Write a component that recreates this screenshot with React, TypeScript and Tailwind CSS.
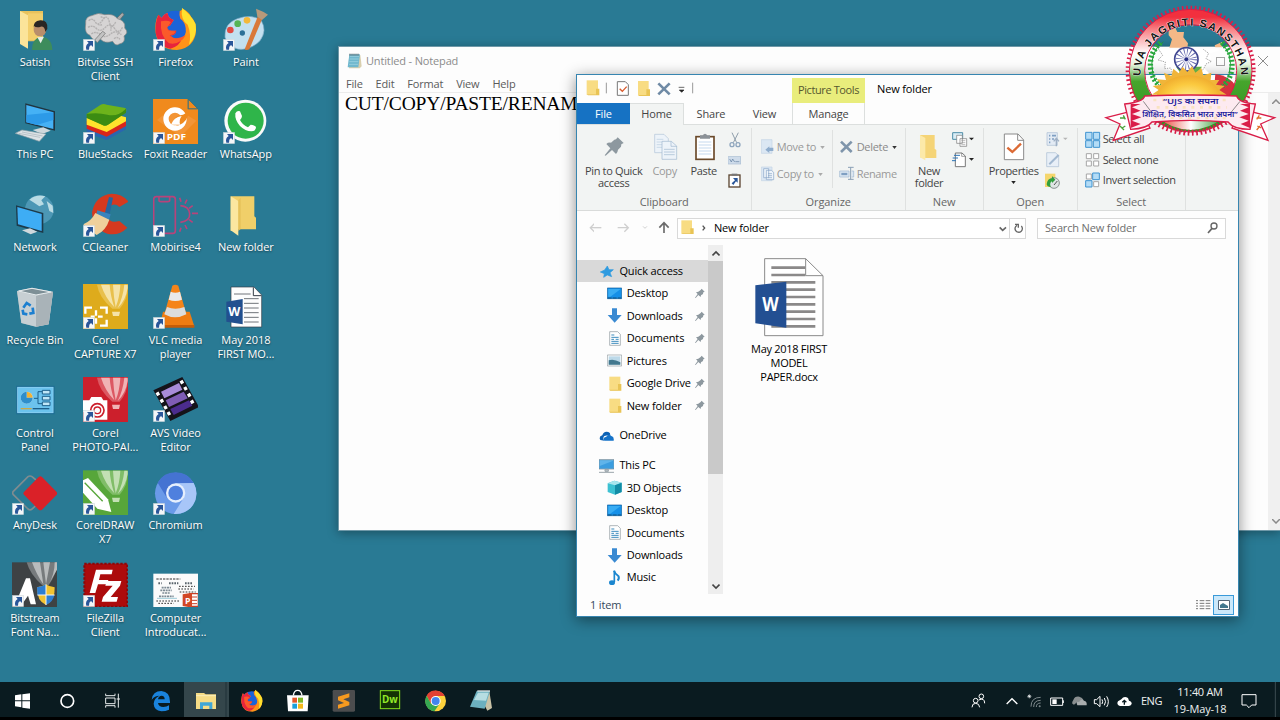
import type { ReactNode } from "react"
import clsx from "clsx"

// All artwork is drawn on a grid of three units per pixel
function Art({ vb, shortcut, className, children }: { vb: string; shortcut?: boolean; className?: string; children?: ReactNode }) {
  const [x, y, w, h] = vb.split(" ").map(Number)
  return (
    <svg viewBox={vb} width={w / 3} height={h / 3} className={clsx("block shrink-0", className)} fill="none">
      {children}
      {shortcut && (
        <g transform={`translate(${x} ${y + 100})`}>
          <rect x="1" width="34" height="34" fill="#f4f6f8" stroke="#b9c3c9" strokeWidth="1" />
          <path d="M12 5H30V23L24 17Q17 21 18 31H10Q6 18 17 11Z" fill="#2a5699" />
        </g>
      )}
    </svg>
  )
}

function Balloon({ x, y, a, b }: { x: number; y: number; a: string; b: string }) {
  return (
    <g transform={`translate(${x} ${y})`}>
      <path d="M42 2Q48 40 88 74H110Q136 45 134 5L130 2Z" fill={a} />
      <path d="M54 2Q66 40 94 70Q82 34 80 2ZM90 2Q92 40 98 70Q110 40 112 2ZM124 2Q120 40 104 72Q128 50 134 12V2Z" fill={b} />
      <path d="M87 83H111L108 96H90Z" fill={b} />
    </g>
  )
}

const art = {
  satish: (
    <Art vb="36 18 135 135">
      <path d="M60 33H129V124H78L60 130Z" fill="#e8c25c" />
      <path d="M60 33L84 46V146L60 132Z" fill="#fbe49a" />
      <path d="M84 40H129V120H84Z" fill="#f3cf6c" />
      <path d="M96 150Q96 114 124 110Q156 112 157 150Z" fill="#3d8c5c" />
      <path d="M112 112L122 130L132 110Z" fill="#e9eee8" />
      <circle cx="120" cy="90" r="19" fill="#b98e6c" />
      <path d="M101 88Q98 62 121 61Q144 60 142 86L136 96Q134 78 122 80Q110 84 101 78Z" fill="#2a2623" />
    </Art>
  ),
  bitvise: (
    <Art vb="247 18 135 135" shortcut>
      <path d="M345 58L365 38L370 44L352 66Z" fill="#a9a9a9" stroke="#666" strokeWidth="2" />
      <path d="M255 72Q252 50 276 46Q292 36 312 44Q340 40 350 56Q376 62 372 84Q386 98 370 108Q376 128 356 132Q344 140 336 124Q312 132 300 118Q276 126 268 106Q250 100 255 72Z" fill="#d6d4d4" stroke="#858585" strokeWidth="2" />
      <path
        d="M264 62Q276 52 284 66T306 60T326 66T346 64M262 82Q276 74 288 86T314 82T342 86T366 80M272 102Q286 92 300 104T330 102T362 104M340 116Q350 108 358 118M300 50Q310 56 318 50M292 72Q296 78 304 74M326 74Q334 80 330 92M352 92Q356 98 350 104"
        stroke="#b3b1b1"
        strokeWidth="4"
        strokeDasharray="6 2"
      />
      <path d="M282 120L306 94L314 100L290 128Z" fill="#c3c3c3" stroke="#6c6c6c" strokeWidth="2" />
    </Art>
  ),
  firefox: (
    <Art vb="458 18 135 135" shortcut>
      <FirefoxShape />
    </Art>
  ),
  paint: (
    <Art vb="669 18 135 135" shortcut>
      <path d="M675 112Q672 70 712 56Q756 40 784 62Q802 92 780 122Q760 144 728 148Q696 150 700 128Q680 128 675 112Z" fill="#c3e0f0" stroke="#7fabc6" strokeWidth="2" />
      <circle cx="691" cy="90" r="10" fill="#e14b43" />
      <circle cx="713" cy="71" r="10" fill="#54b455" />
      <circle cx="741" cy="61" r="10" fill="#f3b83a" />
      <circle cx="727" cy="99" r="8" fill="#2b6f97" />
      <path d="M773 50L786 58L748 148Q738 152 734 148Z" fill="#d9793a" />
      <path d="M768 26Q790 34 804 44L786 60L772 50Z" fill="#b7997a" />
    </Art>
  ),
  thisPc: (
    <Art vb="36 297 135 135">
      <path d="M76 310L165 334V392L76 370Z" fill="#20343f" />
      <path d="M79 315L160 337V387L79 367Z" fill="#45b1f5" />
      <path d="M79 345L160 337V360L110 375L79 367Z" fill="#2c9ae8" />
      <path d="M98 390L130 382L152 392L126 402Z" fill="#cfd8dc" />
      <path d="M46 400L66 390L138 402L118 424Z" fill="#dde3e6" stroke="#8fa0a8" strokeWidth="2" />
      <path d="M56 400L120 412M66 396L128 408" stroke="#a9b4ba" strokeWidth="2" />
    </Art>
  ),
  bluestacks: (
    <Art vb="247 297 135 135" shortcut>
      <path d="M258 374L318 352L376 372V388L318 420L258 398Z" fill="#2b65b0" />
      <path d="M258 364L318 344L376 362V378L318 410L258 386Z" fill="#d9261c" />
      <path d="M258 354L318 336L376 352V364L318 396L258 374Z" fill="#ffe32c" />
      <path d="M258 342L300 314Q308 310 318 314L374 324Q380 330 374 338L322 374Q314 380 304 374L260 354Z" fill="#6db31b" />
      <path d="M258 342Q290 336 320 344T376 326V338L322 374Q312 380 304 374L258 354Z" fill="#3c8c12" />
    </Art>
  ),
  foxit: (
    <Art vb="458 297 135 135" shortcut>
      <path d="M458 297H562V328H593V432H458Z" fill="#f08a1d" />
      <path d="M564 298L592 326H564Z" fill="#f08a1d" stroke="#2b6980" strokeWidth="2" />
      <path d="M470 360L520 320L588 362L540 410Z" fill="#f39536" />
      <circle cx="524" cy="357" r="27" stroke="#fff" strokeWidth="16" />
      <path d="M520 366Q520 346 548 344L566 334Q562 366 536 376Q522 378 520 366Z" fill="#f08a1d" />
      <path d="M512 374Q520 352 544 348Q534 362 540 374Z" fill="#fff" />
      <text x="499" y="421" fontSize="26" fontWeight="700" fontFamily="Open Sans, sans-serif" fill="#fff" textLength="58" lengthAdjust="spacingAndGlyphs">PDF</text>
    </Art>
  ),
  whatsapp: (
    <Art vb="669 297 135 135" shortcut>
      <circle cx="736" cy="362" r="63" fill="#fafafa" />
      <circle cx="737" cy="362" r="54" fill="#2fb54a" />
      <path d="M706 340Q712 330 720 334L726 348Q726 354 720 360Q728 376 744 382L752 374Q764 374 768 382Q768 394 754 394Q736 394 720 378Q704 360 706 340Z" fill="#fff" />
    </Art>
  ),
  network: (
    <Art vb="36 35 135 135">
      <circle cx="118" cy="88" r="43" fill="#4c97b5" />
      <path d="M88 58Q110 40 136 48L124 60L132 72L118 78L100 66ZM140 62L158 76L160 98L148 92Z" fill="#b9dbe4" />
      <path d="M48 75L130 98V158L50 136Z" fill="#1d3a4a" />
      <path d="M52 80L125 101V152L54 132Z" fill="#3eadf5" />
      <path d="M66 150L90 144L112 154L92 162Z" fill="#cfd8dc" />
    </Art>
  ),
  ccleaner: (
    <Art vb="247 35 135 135" shortcut>
      <path d="M384 64L356 80Q346 70 334 74Q316 84 320 110Q328 130 356 122L380 142Q354 168 320 160Q276 146 274 96Q284 44 334 40Q364 40 384 64Z" fill="#d5391f" />
      <path d="M325 50L337 52L326 106L312 100Z" fill="#2566a0" />
      <path d="M290 90L330 102L324 122L286 106Z" fill="#3a84bd" />
      <path d="M284 98L326 118Q316 150 288 164Q264 150 248 132Q272 122 284 98Z" fill="#efd09c" />
    </Art>
  ),
  mobirise: (
    <Art vb="458 35 135 135" shortcut>
      <rect x="460" y="49" width="65" height="110" rx="8" stroke="#b8437a" strokeWidth="5" />
      <path d="M476 50V60Q476 64 482 64H502Q508 64 508 60V50M540 76Q566 78 568 100T540 126M538 52L542 64M560 58L554 70M577 76L566 84M593 99H575M577 126L566 118M560 146L554 134M538 154L542 142" stroke="#b8437a" strokeWidth="5" />
    </Art>
  ),
  folder: (
    <Art vb="669 35 135 135">
      <path d="M692 48H763V108L768 112V147H716L692 152Z" fill="#f0cf69" />
      <path d="M692 48L715 62V166L692 150Z" fill="#fbe7a0" />
      <path d="M715 60V152L722 146V52Z" fill="#e6c25a" />
    </Art>
  ),
  bin: (
    <Art vb="36 313 135 135">
      <path d="M51 334L96 324L159 336L146 434L108 441L64 430Z" fill="#b5c0c5" />
      <path d="M51 334L108 348L159 336L146 434L108 441L64 430Z" fill="#cdd4d7" opacity=".75" />
      <path d="M108 348V441L146 434L159 336Z" fill="#a9b3b8" />
      <path d="M56 334L96 326L154 337L108 346Z" fill="#7d8f96" stroke="#e6ecee" strokeWidth="3" />
      <path d="M70 384L80 370L92 378M98 384L100 400L88 402M82 404L70 402L68 390" stroke="#1c7fd0" strokeWidth="8" />
    </Art>
  ),
  capture: (
    <Art vb="247 313 135 135" shortcut>
      <rect x="247" y="313" width="135" height="135" fill="#deab1c" />
      <Balloon x={247} y={313} a="#e8c04d" b="#f5e3a8" />
      <path d="M254 402V384H274M298 384H318V402M318 420V438H298M254 420V438H274M286 392V408M286 416V432M270 411H282M292 411H306" stroke="#fff" strokeWidth="7" />
    </Art>
  ),
  vlc: (
    <Art vb="458 313 135 135" shortcut>
      <path d="M488 396H568L582 440H478Z" fill="#ef7c12" />
      <path d="M476 436H582V444H476Z" fill="#c65c07" />
      <path d="M516 318Q525 312 534 318L558 404Q524 420 492 404Z" fill="#f58419" />
      <path d="M511 336Q525 342 539 336L545 360Q525 368 505 360Z" fill="#e9e9e9" />
      <path d="M500 382Q525 392 552 382L558 404Q524 422 492 404Z" fill="#dcdcdc" />
    </Art>
  ),
  doc: (
    <Art vb="669 313 135 135">
      <path d="M693 322H762L785 346V442H693Z" fill="#fdfdfd" stroke="#333b45" strokeWidth="2" />
      <path d="M760 323V348H784" stroke="#333b45" strokeWidth="3" />
      <path d="M702 343H752M732 357H776M732 371H776M732 385H776M732 399H776M732 413H776M732 427H776" stroke="#70757a" strokeWidth="3" />
      <path d="M679 366L728 358V434L679 426Z" fill="#22508f" />
      <text x="685" y="409" fontSize="38" fontWeight="700" fontFamily="Open Sans, sans-serif" fill="#fff" textLength="36" lengthAdjust="spacingAndGlyphs">W</text>
    </Art>
  ),
  control: (
    <Art vb="36 36 135 135">
      <rect x="50" y="64" width="112" height="82" fill="#8fd1f3" stroke="#1b6a92" strokeWidth="3" />
      <rect x="54" y="68" width="104" height="74" fill="#6cc3ee" />
      <circle cx="80" cy="98" r="18" fill="#e4f2fa" />
      <path d="M80 80A18 18 0 0 1 98 98H80Z" fill="#f2b235" />
      <path d="M80 80V98H98A18 18 0 1 1 80 80Z" fill="#2f8ecb" />
      <path d="M102 100H114V80H126M114 100V116H126" stroke="#1b5f8a" strokeWidth="3" />
      <path d="M127 76H150V87H127ZM127 94H150V105H127ZM127 111H150V122H127Z" fill="#bfe6f7" stroke="#1b5f8a" strokeWidth="3" />
      <path d="M62 131H95" stroke="#c9a94b" strokeWidth="4" />
      <path d="M98 131H148" stroke="#1b5f8a" strokeWidth="4" />
    </Art>
  ),
  photo: (
    <Art vb="247 36 135 135" shortcut>
      <rect x="247" y="36" width="135" height="135" fill="#cc1f2c" />
      <Balloon x={247} y={36} a="#dc5862" b="#f0b3b5" />
      <path d="M247 106H266L272 96H302L308 106H320V164H280L247 140Z" fill="#fff" />
      <circle cx="290" cy="136" r="20" fill="#fff" stroke="#cc1f2c" strokeWidth="5" />
      <circle cx="290" cy="136" r="10" stroke="#cc1f2c" strokeWidth="4" />
    </Art>
  ),
  avs: (
    <Art vb="458 36 135 135" shortcut>
      <path d="M459 76L546 36L596 126L510 168Z" fill="#15131a" />
      <path d="M482 80L536 54L546 74L492 100Z" fill="#a88bd8" />
      <path d="M496 106L550 80L562 100L506 126Z" fill="#7f5cb4" />
      <path d="M510 132L566 106L576 122L520 150Z" fill="#4b2c8e" />
      <path d="M470 82L475 91M482 103L487 112M493 123L498 132M503 141L508 150M542 47L547 56M553 66L558 75M564 86L569 95M573 106L578 115" stroke="#fff" strokeWidth="10" />
    </Art>
  ),
  anydesk: (
    <Art vb="36 314 135 135" shortcut>
      <path d="M108 344L96 334Q90 330 84 334L40 378Q36 383 40 388L84 431Q90 436 96 431L108 420" stroke="#7f8c90" strokeWidth="5" />
      <path d="M116 335Q121 331 126 335L170 380Q174 384 170 388L126 433Q121 437 116 433L72 388Q68 384 72 380Z" fill="#da2128" />
    </Art>
  ),
  corel: (
    <Art vb="247 314 135 135" shortcut>
      <rect x="247" y="315" width="135" height="135" fill="#57a63a" />
      <Balloon x={247} y={314} a="#80bd68" b="#c3e0b4" />
      <path d="M247 345L262 338L322 402L332 440L290 430L247 382Z" fill="#fff" />
      <path d="M252 352L306 408" stroke="#57a63a" strokeWidth="4" />
    </Art>
  ),
  chromium: (
    <Art vb="458 314 135 135" shortcut>
      <circle cx="526" cy="384" r="62" fill="#6a9ae9" />
      <path d="M472 352A62 62 0 0 1 580 353H526L500 398Z" fill="#4573d2" />
      <path d="M580 353A62 62 0 0 1 520 446L550 398Q560 376 526 354Z" fill="#a8c6f8" />
      <circle cx="526" cy="383" r="29" fill="#e6effd" />
      <circle cx="526" cy="383" r="22" fill="#4f80de" />
    </Art>
  ),
  bitstream: (
    <Art vb="36 37 135 135" shortcut>
      <rect x="36" y="38" width="135" height="135" fill="#3e4244" />
      <path d="M80 38Q90 74 126 106H146Q172 70 171 38Z" fill="#777b7d" />
      <path d="M96 38Q110 76 130 104L120 38ZM130 38L138 104L150 38ZM164 38Q164 74 146 104L171 60V38Z" fill="#b9bcbd" />
      <path d="M46 164L78 86H90L108 164H92L84 138L66 164Z" fill="#fff" />
      <path d="M111 113Q124 112 137 104Q150 112 164 113Q166 152 138 166Q110 154 111 113Z" fill="#f3c331" />
      <path d="M111 113Q124 112 138 104V136H112ZM138 136H163Q160 156 138 166Z" fill="#2d7ed3" />
      <path d="M138 104V166M112 136H164" stroke="#f4f4f4" strokeWidth="3" />
    </Art>
  ),
  filezilla: (
    <Art vb="247 37 135 135" shortcut>
      <rect x="251" y="42" width="129" height="129" fill="#ac0b0c" stroke="#8b0708" strokeWidth="6" strokeDasharray="7 5" />
      <path d="M286 60H336L333 74H299L295 91H323L320 104H292L284 130H267Z" fill="#fff" />
      <path d="M318 94H362L358 108L330 142H352L348 156H303L307 142L336 108H314Z" fill="#fff" />
    </Art>
  ),
  ppt: (
    <Art vb="458 37 135 135">
      <rect x="459" y="72" width="135" height="101" fill="#fbfbfb" />
      <path d="M468 88H540" stroke="#333" strokeWidth="3" strokeDasharray="7 3" />
      <path d="M474 101H484M506 101H534M554 101H576" stroke="#58636b" strokeWidth="6" strokeDasharray="5 3" />
      <path d="M536 110H584M534 118H580M538 127H586M468 154H540M474 161H520" stroke="#333" strokeWidth="3" strokeDasharray="5 4" />
      <path d="M484 114H512M480 122H514M486 130H508M476 140H520" stroke="#7d8a94" strokeWidth="5" strokeDasharray="6 2" />
      <path d="M470 146H530" stroke="#9ecbd8" strokeWidth="3" />
      <path d="M568 132H594V170H568Z" fill="#fff" stroke="#c94028" strokeWidth="4" />
      <path d="M574 142H590M574 152H590M574 162H590" stroke="#c94028" strokeWidth="3" />
      <path d="M547 134L575 129V174L547 169Z" fill="#d24726" />
      <text x="554" y="162" fontSize="26" fontWeight="700" fontFamily="Open Sans, sans-serif" fill="#fff">P</text>
    </Art>
  ),
}

function FirefoxShape() {
  return (
    <>
      <circle cx="525" cy="89" r="57" fill="#1c63d8" />
      <path d="M538 34Q554 24 545 26Q544 22 550 28Q566 36 572 50Q588 66 587 92Q584 142 530 150Q474 150 466 98Q462 66 474 44L484 54Q492 40 502 40Q502 54 520 60L510 76L500 80Q500 90 512 92L528 92Q526 106 510 106Q520 120 540 116Q560 108 556 84Q554 66 540 56Q536 44 538 34Z" fill="#ff9318" />
      <path d="M474 44L484 54Q492 40 502 40Q502 54 520 60L510 76L500 80Q500 90 512 92L528 92Q526 106 510 106Q522 122 544 114Q540 138 510 146Q474 140 466 98Q464 66 474 44Z" fill="#e8243c" />
      <path d="M482 64Q500 60 512 66L504 78Q496 84 506 92L526 94Q522 104 508 106Q522 124 556 106Q540 136 506 130Q478 110 482 64Z" fill="#fb5a2a" />
      <path d="M545 24Q572 44 586 72Q592 108 566 134Q574 104 562 74Q540 60 545 24Z" fill="#ffe02e" />
    </>
  )
}

const desktop: { label: string; icon: ReactNode }[] = [
  { label: "Satish", icon: art.satish },
  { label: "This PC", icon: art.thisPc },
  { label: "Network", icon: art.network },
  { label: "Recycle Bin", icon: art.bin },
  { label: "Control\nPanel", icon: art.control },
  { label: "AnyDesk", icon: art.anydesk },
  { label: "Bitstream\nFont Na...", icon: art.bitstream },
  { label: "Bitvise SSH\nClient", icon: art.bitvise },
  { label: "BlueStacks", icon: art.bluestacks },
  { label: "CCleaner", icon: art.ccleaner },
  { label: "Corel\nCAPTURE X7", icon: art.capture },
  { label: "Corel\nPHOTO-PAI...", icon: art.photo },
  { label: "CorelDRAW\nX7", icon: art.corel },
  { label: "FileZilla\nClient", icon: art.filezilla },
  { label: "Firefox", icon: art.firefox },
  { label: "Foxit Reader", icon: art.foxit },
  { label: "Mobirise4", icon: art.mobirise },
  { label: "VLC media\nplayer", icon: art.vlc },
  { label: "AVS Video\nEditor", icon: art.avs },
  { label: "Chromium", icon: art.chromium },
  { label: "Computer\nIntroducat...", icon: art.ppt },
  { label: "Paint", icon: art.paint },
  { label: "WhatsApp", icon: art.whatsapp },
  { label: "New folder", icon: art.folder },
  { label: "May 2018\nFIRST MO...", icon: art.doc },
]

function Desktop() {
  return (
    <div className="-ml-[0.2px] grid w-[281.2px] grid-flow-col auto-cols-[70.3px] grid-rows-[repeat(7,92.7px)] tracking-[-0.06px]">
      {desktop.map((item) => (
        <div key={item.label} className="flex flex-col items-center pt-[6.3px] text-center">
          {item.icon}
          <div className="mt-[3.5px] text-[11px] leading-[14px] whitespace-pre text-white [text-shadow:0_1px_2px_rgba(0,0,0,0.5)]">
            {item.label}
          </div>
        </div>
      ))}
    </div>
  )
}

function NotepadIcon() {
  return (
    <Art vb="0 0 45 48">
      <path d="M8 6H40L44 40L38 46H6Z" fill="#d9cfae" />
      <path d="M7 4H39L34 43H2Z" fill="#6fb7cd" />
      <path d="M9 10H36M8 18H35M7 26H34M6 34H33" stroke="#a6d9e6" strokeWidth="2" />
      <path d="M9 2V8M15 2V8M21 2V8M27 2V8M33 2V8" stroke="#58646a" strokeWidth="3" />
    </Art>
  )
}

function Notepad() {
  return (
    <div className="absolute top-[46px] left-[338px] flex h-[485px] w-[942px] flex-col border border-r-0 border-[#6f98a8] bg-[#fdfdfd] shadow-[0_2px_10px_rgba(0,0,0,0.35)]">
      <div className="flex h-[28px] items-center pl-[8px] text-[11px] text-[#8c8c8c]">
        <NotepadIcon />
        <span className="ml-1 grow">Untitled - Notepad</span>
        <div className="mr-[33px] h-[9px] w-[9px] border border-[#a5a5a5]" />
        <svg viewBox="0 0 10 10" className="mr-[12px] h-[10px] w-[10px]" stroke="#8c8c8c">
          <path d="M0 0L10 10M10 0L0 10" />
        </svg>
      </div>
      <div className="flex h-[18px] items-center gap-[13px] border-b border-[#ececec] pt-px pl-[7px] text-[11px] tracking-[-0.2px] text-[#5a5a5a]">
        {["File", "Edit", "Format", "View", "Help"].map((m) => (
          <span key={m}>{m}</span>
        ))}
      </div>
      <div className="flex min-h-0 grow">
        <div className="grow overflow-hidden pl-[6px] font-['Liberation_Serif',serif] text-[19.5px] leading-[22px] tracking-[-0.15px] text-black">
          CUT/COPY/PASTE/RENAME
        </div>
        <div className="flex w-[12px] flex-col justify-between bg-[#f0f0f0] py-[6px] pl-1">
          <svg viewBox="0 0 8 5" className="h-[5px] w-2" stroke="#8a8a8a" strokeWidth="1.5" fill="none">
            <path d="M0 5L4 1L8 5" />
          </svg>
          <svg viewBox="0 0 8 5" className="h-[5px] w-2" stroke="#8a8a8a" strokeWidth="1.5" fill="none">
            <path d="M0 0L4 4L8 0" />
          </svg>
        </div>
      </div>
    </div>
  )
}

function TitleBar() {
  return (
    <div className="flex h-7 items-center pl-[0.7px]">
      <Art vb="8 24 73 66">
        <path d="M34 31H68V74H34Z" fill="#f8dc83" />
        <path d="M62 56H72V76H38L34 73H62Z" fill="#e9c455" />
      </Art>
      <Art vb="81 24 34 66">
        <path d="M94 38V70" stroke="#999" strokeWidth="3" />
      </Art>
      <Art vb="115 24 60 66">
        <path d="M128 35H152L161 44V76H128Z" fill="#fff" stroke="#777" strokeWidth="3" />
        <path d="M135 56L143 64L156 50" stroke="#d9592b" strokeWidth="4" />
      </Art>
      <Art vb="175 24 60 66">
        <path d="M190 33H222V76H190Z" fill="#f8dc83" />
        <path d="M215 58H226V78H194L190 75H215Z" fill="#e9c455" />
      </Art>
      <Art vb="235 24 60 66">
        <path d="M251 40L285 73M285 40L251 73" stroke="#6f8aa5" strokeWidth="8" />
      </Art>
      <Art vb="295 24 356 66">
        <path d="M312 52H329M314 60H328L321 67Z" fill="#222" stroke="#222" strokeWidth="2" />
        <path d="M354 38V70" stroke="#999" strokeWidth="3" />
      </Art>
      <div className="mt-[3px] flex h-[25px] w-[73px] items-center justify-center bg-[#e9ed7c] text-[11px] tracking-[-0.4px] whitespace-nowrap text-[#56572f]">
        Picture Tools
      </div>
      <span className="ml-3 text-[11px] text-black">New folder</span>
    </div>
  )
}

function Tabs() {
  return (
    <div className="flex h-[22px] border-b border-[#dcdfde] text-center text-[11px] leading-[21px] text-[#444]">
      <div className="w-[53px] bg-[#1672c3] text-white">File</div>
      <div className="-mb-px h-[22px] w-[54px] border-t border-r border-[#dcdfde] bg-[#f2f4f3] leading-[20px]">Home</div>
      <div className="w-[54px]">Share</div>
      <div className="w-[53px]">View</div>
      <div className="ml-px w-[73px] border-x border-[#dcdfde]">Manage</div>
    </div>
  )
}

function Group({ name, className, children }: { name: string; className: string; children: ReactNode }) {
  return (
    <div className={clsx("mt-[3px] flex h-[82px] shrink-0 flex-col border-r border-[#dfe1e0]", className)}>
      <div className="flex h-[67px] pt-[2px]">{children}</div>
      <div className="text-center text-[11px] leading-[14px] tracking-[-0.1px] text-[#666]">{name}</div>
    </div>
  )
}

function BigButton({ icon, label, dim }: { icon: ReactNode; label: string; dim?: boolean }) {
  return (
    <div className={clsx("flex flex-col items-center text-center text-[11px] leading-[12px] whitespace-pre", dim ? "text-[#999]" : "text-[#444]")}>
      {icon}
      {label}
    </div>
  )
}

function Caret({ dark }: { dark?: boolean }) {
  return (
    <svg viewBox="0 0 6 4" className="ml-[4px] h-[3px] w-[5px] shrink-0" fill={dark ? "#333" : "#aaa"}>
      <path d="M0 0H6L3 4Z" />
    </svg>
  )
}

function Ribbon() {
  return (
    <div className="flex h-[86px] border-b border-[#d9dbda] bg-[#f2f4f3] pl-[0.7px] tracking-[-0.35px]">
      <Group name="Clipboard" className="w-[174px]">
        <BigButton
          label={"Pin to Quick\naccess"}
          icon={
            <Art vb="8 180 216 105">
              <path d="M127 202L145 219L138 223L137 230L128 239Q127 248 122 252L110 240L91 257L88 256L105 235L93 222Q98 217 107 218L117 209L122 208Z" fill="#8d989f" />
            </Art>
          }
        />
        <BigButton
          dim
          label="Copy"
          icon={
            <Art vb="224 180 90 105">
              <path d="M238 193H266L279 206V248H238Z" fill="#edf3f9" stroke="#b0c3d8" strokeWidth="2" />
              <path d="M244 208H264M244 216H264M244 224H264M244 232H264" stroke="#b8cbdf" strokeWidth="2" />
              <path d="M260 214H288L304 228V268H260Z" fill="#edf3f9" stroke="#9fb6ce" strokeWidth="2" />
              <path d="M287 214V229H304M266 238H298M266 246H298M266 254H298" stroke="#9fb6ce" strokeWidth="2" />
            </Art>
          }
        />
        <BigButton
          label="Paste"
          icon={
            <Art vb="314 180 144 105">
              <rect x="362" y="200" width="54" height="68" fill="#fff" stroke="#6b4a2b" strokeWidth="5" />
              <path d="M374 206V196H382Q389 186 396 196H404V206Z" fill="#8b9197" />
              <path d="M370 216H408M370 225H408M370 234H408M370 243H408M370 252H408" stroke="#c5d9ee" strokeWidth="3" />
            </Art>
          }
        />
        <div>
          <Art vb="458 180 42 66">
            <path d="M470 188L484 218M489 188L474 218" stroke="#8f9eab" strokeWidth="3" />
            <circle cx="470" cy="224" r="6" stroke="#8fa6be" strokeWidth="4" />
            <circle cx="488" cy="224" r="6" stroke="#8fa6be" strokeWidth="4" />
          </Art>
          <Art vb="458 246 42 54">
            <rect x="458" y="260" width="38" height="22" fill="#cfdcea" stroke="#a9bed3" strokeWidth="2" />
            <path d="M463 267L468 276L472 267L478 276M480 275H492" stroke="#5f7d9f" strokeWidth="2" />
          </Art>
          <Art vb="458 300 42 60">
            <rect x="461" y="315" width="33" height="36" fill="#fff" stroke="#5c4632" strokeWidth="4" />
            <path d="M469 317V311H486V317Z" fill="#777" />
            <path d="M473 324H487V338L482 334L474 345L469 340L479 331Z" fill="#2a5699" />
          </Art>
        </div>
      </Group>

      <Group name="Organize" className="w-[154px]">
        <div className="flex flex-col pt-[3.5px] pl-[9px] text-[11px] tracking-[-0.3px] text-[#999]">
          <div className="flex h-[27px] w-[71px] items-center whitespace-nowrap">
            <Art vb="555 201 48 60">
              <path d="M556 209H588V250H556Z" fill="#dbe7f3" stroke="#c3d3e4" strokeWidth="2" />
              <path d="M592 233V243H580V249L568 239L580 229V233Z" fill="#8fadcd" />
            </Art>
            Move to
            <Caret />
          </div>
          <div className="flex h-[27px] w-[71px] items-center whitespace-nowrap">
            <Art vb="555 281 48 60">
              <path d="M556 290H588V331H556Z" fill="#dbe7f3" stroke="#c3d3e4" strokeWidth="2" />
              <path d="M563 295H578V322H563ZM571 300H586L593 306V328H571Z" fill="#eef4fa" stroke="#86a5c6" strokeWidth="2" />
              <path d="M576 310H588M576 316H588M576 322H588" stroke="#86a5c6" strokeWidth="2" />
            </Art>
            Copy to
            <Caret />
          </div>
        </div>
        <div className="flex h-[58px] flex-col border-l border-[#dfe1e0] pt-[3.5px] pl-[6px] text-[11px] text-[#999]">
          <div className="flex h-[27px] items-center tracking-[-0.3px] text-[#8a8a8a]">
            <Art vb="788 201 54 60">
              <path d="M794 215L826 246M826 215L794 246" stroke="#7f95ab" strokeWidth="8" />
            </Art>
            Delete
            <Caret dark />
          </div>
          <div className="flex h-[27px] items-center">
            <Art vb="788 281 54 60">
              <path d="M790 302H818V320H790ZM826 302H832V320H826" fill="#dbe7f3" stroke="#9fb6ce" strokeWidth="2" />
              <path d="M795 311H813" stroke="#7f9fc2" strokeWidth="7" />
              <path d="M815 291H832M815 327H832M823 291V327" stroke="#8a9fb5" strokeWidth="3" />
            </Art>
            Rename
          </div>
        </div>
      </Group>

      <Group name="New" className="w-[78px]">
        <BigButton
          label={"New\nfolder"}
          icon={
            <Art vb="16 180 140 105">
              <path d="M58 195H102V236L107 240V264H76L58 262Z" fill="#f5d477" />
              <path d="M58 195L74 204V271L58 262Z" fill="#fce9a9" />
            </Art>
          }
        />
        <div>
          <Art vb="156 180 70 60">
            <path d="M158 188H188V208H158Z" fill="#d9edf6" stroke="#4d8ea8" strokeWidth="3" />
            <path d="M170 196H187V220H170ZM180 206H200V229H180Z" fill="#fff" stroke="#777" strokeWidth="2" />
            <path d="M184 212H196M184 218H196M184 224H196" stroke="#999" strokeWidth="2" />
            <path d="M207 203H222L214.500 211Z" fill="#222" />
          </Art>
          <Art vb="156 240 70 60">
            <path d="M166 249H186L196 258V290H166Z" fill="#fff" stroke="#777" strokeWidth="3" />
            <path d="M185 249V259H196" stroke="#777" strokeWidth="2" />
            <path d="M162 256H180M158 264H174M156 272H168" stroke="#2d73b5" strokeWidth="3" />
            <path d="M207 264H222L214.500 272Z" fill="#222" />
          </Art>
        </div>
      </Group>

      <Group name="Open" className="w-[94px]">
        <div className="flex flex-col items-center">
          <BigButton
            label="Properties"
            icon={
              <Art vb="250 180 180 105">
                <path d="M311 192H352L369 210V269H311Z" fill="#fff" stroke="#8a8a8a" strokeWidth="3" />
                <path d="M351 192V211H369" stroke="#8a8a8a" strokeWidth="3" />
                <path d="M320 233L335 246L361 221" stroke="#dc6a34" strokeWidth="7" />
              </Art>
            }
          />
          <svg viewBox="0 0 6 4" className="mt-1 h-[3px] w-[5px]" fill="#222">
            <path d="M0 0H6L3 4Z" />
          </svg>
        </div>
        <div>
          <Art vb="430 180 75 64">
            <path d="M439 188H470V226H439Z" fill="#e3ebf4" stroke="#a9bcd1" strokeWidth="2" />
            <path d="M445 197H449M445 207H449M445 217H449M454 197H466M454 207H460" stroke="#7f9fc2" strokeWidth="5" />
            <path d="M467 229V206M459 214L467 205L475 214" stroke="#9fb0c4" strokeWidth="4" />
            <path d="M487 203H501L494 210Z" fill="#b5b5b5" />
          </Art>
          <Art vb="430 244 75 58">
            <path d="M438 249H464L474 258V291H438Z" fill="#e8eff7" stroke="#a9bcd1" strokeWidth="2" />
            <path d="M446 284L474 256" stroke="#a3b9d1" strokeWidth="6" />
          </Art>
          <Art vb="430 302 75 60">
            <path d="M433 310H464V350H433Z" fill="#f5d66c" />
            <circle cx="460" cy="338" r="16" fill="#dfe5e4" stroke="#8a9391" strokeWidth="3" />
            <path d="M438 342Q440 324 454 324V317L464 328L454 338V333Q446 336 450 350Q440 350 438 342Z" fill="#31a03d" />
            <path d="M460 344L470 332" stroke="#555" strokeWidth="3" />
          </Art>
        </div>
      </Group>

      <Group name="Select" className="w-[108px]">
        <div className="-mt-[0.6px] flex flex-col pl-[7px] text-[11px] whitespace-nowrap text-[#444]">
          <div className="flex h-[20.4px] items-center">
            <Art vb="552 180 54 54">
              <path d="M554 184H573V205H554ZM577 184H596V205H577ZM554 209H573V229H554ZM577 209H596V229H577Z" fill="#b4dcf6" stroke="#3f93d0" strokeWidth="3" />
            </Art>
            Select all
          </div>
          <div className="flex h-[20.4px] items-center">
            <Art vb="552 243 54 54">
              <path d="M556 251H571V266H556ZM578 251H593V266H578ZM556 273H571V288H556ZM578 273H593V288H578Z" fill="#fff" stroke="#a5a5a5" strokeWidth="3" />
            </Art>
            Select none
          </div>
          <div className="flex h-[20.4px] items-center">
            <Art vb="552 304 54 54">
              <path d="M556 313H571V328H556ZM578 336H593V351H578Z" fill="#fff" stroke="#a5a5a5" strokeWidth="3" />
              <path d="M575 310H595V330H575ZM554 333H573V352H554Z" fill="#b4dcf6" stroke="#3f93d0" strokeWidth="3" />
            </Art>
            Invert selection
          </div>
        </div>
      </Group>
    </div>
  )
}

function AddressBar() {
  return (
    <div className="flex h-[34px] items-center">
      <Art vb="8 430 50 90">
        <path d="M80 474H48M60 462L48 474L60 486" stroke="#cfcfcf" strokeWidth="4" />
      </Art>
      <Art vb="58 430 54 90">
        <path d="M58 474H80" stroke="#cfcfcf" strokeWidth="4" />
      </Art>
      <Art vb="112 430 78 90">
        <path d="M129 474H160M149 462L161 474L149 486" stroke="#cfcfcf" strokeWidth="4" />
      </Art>
      <Art vb="190 430 50 90">
        <path d="M205 470L211 476L217 470" stroke="#cfcfcf" strokeWidth="3" />
      </Art>
      <Art vb="240 430 68 90">
        <path d="M270 490V460M256 474L270 459L284 474" stroke="#6b6b6b" strokeWidth="5" />
      </Art>
      <div className="flex h-[21px] w-[349px] items-center border border-[#d9d9d9] bg-white text-[11px] text-black">
        <Art vb="308 445 62 60">
          <path d="M318 452H350V492H318Z" fill="#f8dc83" />
          <path d="M345 476H355V493H322L318 491H345Z" fill="#e9c455" />
        </Art>
        <Art vb="370 445 46 60">
          <path d="M381 468L387 475L381 482" stroke="#555" strokeWidth="4" />
        </Art>
        <span className="grow">New folder</span>
        <Art vb="290 445 36 60">
          <path d="M298 473L307 482L317 473" stroke="#666" strokeWidth="5" />
        </Art>
        <div className="h-full w-px bg-[#d9d9d9]" />
        <Art vb="329 445 46 60">
          <path d="M350 467A11 11 0 1 0 363 469M344 464H354V474" stroke="#666" strokeWidth="4" />
        </Art>
      </div>
      <div className="ml-[11px] flex h-[21px] w-[189px] items-center justify-between border border-[#d9d9d9] bg-white pl-[7px] text-[11px] text-[#6d6d6d]">
        Search New folder
        <Art vb="915 445 60 60">
          <circle cx="942" cy="469" r="9" stroke="#666" strokeWidth="4" />
          <path d="M936 476L924 490" stroke="#666" strokeWidth="5" />
        </Art>
      </div>
    </div>
  )
}

const navArt = {
  star: <path d="M25 6L30 17L43 17L33 26L38 38L25 33L14 40L16 29L4 24L17 18Z" fill="#2f9be0" stroke="#2f9be0" strokeWidth="2" />,
  desktop: (
    <>
      <path d="M1 6H44V38H1Z" fill="#1590e8" stroke="#0d5f9d" strokeWidth="2" />
      <path d="M4 9H41L10 32H4Z" fill="#38acf3" />
      <path d="M2 36H43" stroke="#0d4f80" strokeWidth="3" strokeDasharray="12 3" />
    </>
  ),
  down: <path d="M15 1H30V21H44L23 44L2 21H15Z" fill="#3a8ad2" />,
  docs: (
    <>
      <path d="M8 2H32L40 10V43H8Z" fill="#fff" stroke="#8b969c" strokeWidth="2" />
      <path d="M13 12H22M13 19H35M26 25H35M13 25H21M13 31H35M13 37H35" stroke="#3c8cbd" strokeWidth="3" />
    </>
  ),
  pics: (
    <>
      <path d="M1 6H44V39H1Z" fill="#fff" stroke="#8b969c" strokeWidth="2" />
      <path d="M5 10H40V35H5Z" fill="#bcd9e9" />
      <path d="M5 22Q20 16 40 28V35H5Z" fill="#43788e" />
    </>
  ),
  folder: (
    <>
      <path d="M7 2H40V43H7Z" fill="#f8dc83" />
      <path d="M33 24H43V44H10L7 41H33Z" fill="#e9c455" />
    </>
  ),
  cloud: (
    <>
      <path d="M4 36Q-2 26 10 22Q14 8 28 12Q34 14 34 20L16 24Q10 30 16 38Z" fill="#0c62b5" />
      <path d="M16 38Q10 28 22 26Q28 16 37 24Q46 26 44 38Z" fill="#1573c9" />
    </>
  ),
  pc: (
    <>
      <path d="M0 5H45V33H0Z" fill="#5fb4ea" stroke="#6f7d86" strokeWidth="2" />
      <path d="M2 24L43 8V31H2Z" fill="#3b9ddf" />
      <path d="M18 34H28V40H18ZM0 43H45" fill="#b8c1c6" stroke="#9aa5ab" strokeWidth="3" />
    </>
  ),
  cube: (
    <>
      <path d="M2 10L22 2L44 8V36L24 44L2 36Z" fill="#3cc1d2" />
      <path d="M2 10L22 2L44 8L24 16Z" fill="#a9e6ee" />
      <path d="M24 16L44 8V36L24 44Z" fill="#138ca6" />
    </>
  ),
  music: (
    <>
      <path d="M21 2Q24 12 34 18Q38 24 32 32" stroke="#1b86cf" strokeWidth="6" />
      <path d="M22 2V36" stroke="#1b86cf" strokeWidth="5" />
      <ellipse cx="15" cy="38" rx="9" ry="7" fill="#1b86cf" />
    </>
  ),
}

type NavItem = { label: string; icon: keyof typeof navArt; level: 1 | 2; pinned?: boolean; gap?: boolean; active?: boolean }

const nav: NavItem[] = [
  { label: "Quick access", icon: "star", level: 1, active: true },
  { label: "Desktop", icon: "desktop", level: 2, pinned: true },
  { label: "Downloads", icon: "down", level: 2, pinned: true },
  { label: "Documents", icon: "docs", level: 2, pinned: true },
  { label: "Pictures", icon: "pics", level: 2, pinned: true },
  { label: "Google Drive", icon: "folder", level: 2, pinned: true },
  { label: "New folder", icon: "folder", level: 2, pinned: true },
  { label: "OneDrive", icon: "cloud", level: 1, gap: true },
  { label: "This PC", icon: "pc", level: 1, gap: true },
  { label: "3D Objects", icon: "cube", level: 2 },
  { label: "Desktop", icon: "desktop", level: 2 },
  { label: "Documents", icon: "docs", level: 2 },
  { label: "Downloads", icon: "down", level: 2 },
  { label: "Music", icon: "music", level: 2 },
]

function NavPane() {
  return (
    <div className="flex w-[146px] shrink-0">
      <div className="w-[131px] pt-[15px] text-[11px] text-black">
        {nav.map((n, i) => (
          <div
            key={i}
            className={clsx(
              "flex h-[22.45px] items-center gap-[5px] whitespace-nowrap",
              n.level === 1 ? "pl-[22.4px]" : "pl-[29.7px]",
              n.gap && "mt-[7.4px]",
              n.active && "bg-[#d9d9d9]"
            )}
          >
            <Art vb="0 0 45 46">{navArt[n.icon]}</Art>
            <span className="min-w-0 grow">{n.label}</span>
            {n.pinned && (
              <Art vb="0 0 30 33" className="mr-[3px] -ml-1">
                <path d="M20 2L29 11L25 13L24 18L18 22L17 27L10 21L2 30L0 29L8 18L3 13L10 11L17 6Z" fill="#8d989f" />
              </Art>
            )}
          </div>
        ))}
      </div>
      <div className="flex w-[15px] flex-col items-center justify-between bg-[#eeeeee]">
        <div className="flex w-full flex-col items-center">
          <svg viewBox="0 0 8 16" className="h-4 w-2" stroke="#444" strokeWidth="1.6" fill="none">
            <path d="M0.5 10.5L4 7L7.5 10.5" />
          </svg>
          <div className="h-[213px] w-full bg-[#c9c9c9]" />
        </div>
        <svg viewBox="0 0 8 16" className="h-4 w-2" stroke="#444" strokeWidth="1.6" fill="none">
          <path d="M0.5 6.5L4 10L7.5 6.5" />
        </svg>
      </div>
    </div>
  )
}

function Explorer() {
  return (
    <div className="absolute top-[74px] left-[576px] flex h-[543px] w-[663px] flex-col border border-[#3785b0] bg-[#fdfdfd] shadow-[0_3px_14px_rgba(0,0,0,0.45)]">
      <TitleBar />
      <Tabs />
      <Ribbon />
      <AddressBar />
      <div className="flex h-[349px]">
        <NavPane />
        <div className="flex grow items-start">
          <div className="mt-[10px] ml-[28px] flex w-[76px] flex-col items-center text-center text-[11px] leading-[14px] tracking-[-0.3px] whitespace-pre text-black">
            <Art vb="530 45 225 261">
              <path d="M568 56H691L743 107V287H568Z" fill="#fff" stroke="#8a8a8a" strokeWidth="3" />
              <path d="M691 56V107H743" stroke="#8a8a8a" strokeWidth="3" />
              <path d="M588 83H690M588 105H690M588 127H720M630 149H720M630 171H720M630 193H720M630 215H720M630 237H720M588 259H720" stroke="#8b8989" strokeWidth="8" />
              <path d="M540 136L633 125V263L540 250Z" fill="#234f92" />
              <text x="561" y="213" fontSize="56" fontWeight="700" fontFamily="Open Sans, sans-serif" fill="#fff" textLength="49" lengthAdjust="spacingAndGlyphs">W</text>
            </Art>
            {"May 2018 FIRST\nMODEL\nPAPER.docx"}
          </div>
        </div>
      </div>
      <div className="flex grow items-center pl-[13px] text-[11px] text-[#35485c]">
        <span className="grow">1 item</span>
        <Art vb="0 0 54 54">
          <path d="M3 14H9M3 22H9M3 30H9M3 38H9M14 14H28M14 22H28M14 30H28M14 38H28M32 14H46M32 22H46M32 30H46M32 38H46" stroke="#777" strokeWidth="3" />
        </Art>
        <div className="mr-[4px] flex h-[20px] w-[21px] items-center justify-center border border-[#3a9ad9] bg-[#cbe8fa]">
          <svg viewBox="0 0 12 10" className="h-[10px] w-3">
            <path d="M0.5 0.5H11.5V9.5H0.5Z" fill="#fff" stroke="#567" />
            <path d="M2 8V5L5 3L10 6V8Z" fill="#43788e" />
          </svg>
        </div>
      </div>
    </div>
  )
}

// Organisation emblem floating above the windows
function Emblem() {
  return (
    <div className="absolute top-0 left-[1100px] tracking-normal">
      <Art vb="0 0 540 450">
        <defs>
          <linearGradient id="ring" x1="0" y1="0" x2="0" y2="1">
            <stop offset="0" stopColor="#f2303e" />
            <stop offset=".12" stopColor="#f88488" />
            <stop offset=".34" stopColor="#fff" />
            <stop offset=".44" stopColor="#e6f3e0" />
            <stop offset=".6" stopColor="#46a52c" />
            <stop offset="1" stopColor="#2f9422" />
          </linearGradient>
          <radialGradient id="sun" cx=".5" cy=".55" r=".6">
            <stop offset="0" stopColor="#fff29a" />
            <stop offset=".6" stopColor="#fbc93f" />
            <stop offset="1" stopColor="#eda52a" />
          </radialGradient>
          <linearGradient id="flag">
            <stop offset="0" stopColor="#e8372a" />
            <stop offset=".5" stopColor="#fff" />
            <stop offset="1" stopColor="#2c9a2d" />
          </linearGradient>
          <path id="arc" d="M121 228A151 151 0 0 1 423 228V270" />
        </defs>
        <path d="M346 222Q392 228 410 262V296H340Z" fill="#d7323f" />
        <path d="M206 92L226 84L232 96H252L250 112L264 130L262 143H208L216 118L206 106ZM344 136L366 126V142H346Z" fill="#f3b887" />
        <path d="M172 146H356V152L330 160L334 184L322 190L312 204L330 222H220L206 208L196 208V192L176 184L186 170Z" fill="#fff" />
        <path d="M176 148L188 166L174 180L196 186L194 206L212 204L218 222M310 148L326 160L318 176L334 184L318 192L310 208L296 218" stroke="#777" strokeWidth="2" strokeDasharray="4 3" />
        <path d="M228 200H306L288 226H246Z" fill="#5fae49" />
        <circle cx="272" cy="212" r="188" stroke="#d91d48" strokeWidth="14" strokeDasharray="5 8" />
        <circle cx="272" cy="212" r="161" stroke="url(#ring)" strokeWidth="45" />
        <circle cx="272" cy="212" r="184" stroke="#d91d48" strokeWidth="3" />
        <circle cx="272" cy="212" r="138" stroke="#d91d48" strokeWidth="3" />
        <text fontSize="32" fontWeight="700" fontFamily="Liberation Sans, sans-serif" fill="#141414" stroke="#fff" strokeWidth="2" paintOrder="stroke">
          <textPath href="#arc" textLength="472" lengthAdjust="spacing">UVA JAGRITI SANSTHAN</textPath>
        </text>
        <path d="M190 126Q146 156 158 220Q164 246 184 262M358 126Q402 156 388 220Q382 246 362 262" stroke="#1f9a35" strokeWidth="3" />
        <path d="M182 128Q142 164 154 216Q160 242 180 258M366 128Q404 164 394 216Q388 242 368 258" stroke="#27a83c" strokeWidth="16" strokeDasharray="6 6" />
        <circle cx="259" cy="178" r="35" stroke="#3f4691" strokeWidth="5" fill="#fff" />
        <circle cx="259" cy="178" r="19" stroke="#6368ad" strokeWidth="26" strokeDasharray="2 5.4" />
        <circle cx="259" cy="178" r="6" fill="#272e86" />
        <path
          d="M155 284L176 270L158 258L184 254L170 238L198 240L192 218L214 228L220 206L236 220L248 200L262 216L276 198L286 218L304 204L310 226L334 218L332 240L358 240L348 254L374 258L358 270L380 284Z"
          fill="#f0b53a"
        />
        <ellipse cx="266" cy="294" rx="96" ry="68" fill="url(#sun)" />
        <path d="M176 352H370Q330 388 272 390Q212 388 176 352Z" fill="url(#flag)" />
        <path d="M174 358Q212 394 272 394T372 358" stroke="#d91d48" strokeWidth="9" strokeDasharray="5 6" />
        <path d="M92 334L18 353L60 372L40 421L150 384L124 332ZM450 334L524 353L482 372L504 421L396 384L420 332Z" fill="#fff" stroke="#d91d48" strokeWidth="4" />
        <path d="M74 312Q130 306 134 288Q272 282 410 288Q416 308 466 312L450 388Q400 388 384 366Q272 356 156 366Q142 386 92 388Z" fill="#fdeaf0" stroke="#d91d48" strokeWidth="4" />
        <path d="M92 312H122L96 322L122 332L96 342L124 352L96 362L122 372L92 384ZM450 312H420L446 322L420 332L446 342L418 352L446 362L422 372L450 384Z" fill="#d91d48" />
        <path d="M130 304L154 336M420 304L394 336" stroke="#555" strokeWidth="2" />
        <path d="M70 346L76 358M60 354H74M66 384L76 378M60 378L72 390" stroke="#4aa13a" strokeWidth="4" />
        <path d="M478 346L470 358M484 354H470M484 384L472 378M480 378L470 390" stroke="#e0702c" strokeWidth="4" />
        <path d="M160 300H390M170 322H380M160 354H390" stroke="#f9e3c0" strokeWidth="8" strokeDasharray="9 17" />
        <g fill="#1c1c9c" fontWeight="600" fontFamily="Noto Sans, Noto Sans Devanagari, Lohit Devanagari, sans-serif" textAnchor="middle">
          <text x="272" y="313" fontSize="22" textLength="166" lengthAdjust="spacingAndGlyphs">“UJS का सपना</text>
          <text x="270" y="350" fontSize="23" textLength="286" lengthAdjust="spacingAndGlyphs">शिक्षित, विकसित भारत अपना”</text>
        </g>
      </Art>
    </div>
  )
}

function Taskbar() {
  return (
    <div className="absolute inset-x-0 bottom-0 flex h-[38px] border-b-[3px] border-black bg-[#0a1b20]">
      <Art vb="0 397 135 105">
        <path d="M45 437L64 434V452H45ZM67 434L90 431V452H67ZM45 455H64V473L45 470ZM67 455H90V477L67 474Z" fill="#fff" />
      </Art>
      <Art vb="135 397 135 105">
        <circle cx="202" cy="454" r="19" stroke="#fff" strokeWidth="5" />
      </Art>
      <Art vb="270 397 144 105">
        <path d="M317 432V438H345V432M317 474V468H345V474M317 445H345V462H317ZM355 432V474M350 448H360" stroke="#e8ecec" strokeWidth="3" />
      </Art>
      <Art vb="414 397 138 105">
        <path d="M455 450Q458 424 484 424Q510 426 510 456V460H474Q476 472 490 472Q500 472 507 467V480Q497 485 484 485Q462 482 461 462Q462 446 478 438Q464 438 455 450ZM474 449H494Q494 438 485 438T474 449Z" fill="#1a83dc" fillRule="evenodd" />
      </Art>
      <Art vb="552 397 135 105" className="bg-[#34464b]">
        <path d="M588 430H612L617 434H648V478H588Z" fill="#f6dc86" />
        <path d="M588 438H648" stroke="#fbeebb" strokeWidth="3" />
        <path d="M600 478V458H637V478H628V468H609V478Z" fill="#3fa6d6" />
        <path d="M678 397V503" stroke="#1f3138" strokeWidth="3" />
      </Art>
      <Art vb="687 397 138 105">
        <g transform="translate(482 408) scale(.52)">
          <FirefoxShape />
        </g>
      </Art>
      <Art vb="-15 22 138 105">
        <path d="M40 62Q42 47 53 47T66 62" stroke="#fff" strokeWidth="4" />
        <path d="M21 62H86L83 110H24Z" fill="#fff" />
        <path d="M37 69H51V84H37Z" fill="#e4572b" />
        <path d="M54 69H69V84H54Z" fill="#7eb726" />
        <path d="M37 87H51V102H37Z" fill="#1ba0dd" />
        <path d="M54 87H69V102H54Z" fill="#f5b81b" />
      </Art>
      <Art vb="123 22 138 105">
        <rect x="158" y="46" width="67" height="65" rx="4" fill="#4c4d4e" />
        <path d="M208 56V68L190 74L208 82V92L174 102V90L192 85L174 77V66Z" fill="#f79a1f" />
      </Art>
      <Art vb="261 22 138 105">
        <rect x="301" y="48" width="58" height="54" fill="#143305" stroke="#86e21d" strokeWidth="3" />
        <text x="306" y="86" fontSize="29" fontWeight="700" fontFamily="Open Sans, sans-serif" fill="#92ea29" textLength="47" lengthAdjust="spacingAndGlyphs">Dw</text>
      </Art>
      <Art vb="399 22 138 105">
        <circle cx="467" cy="79" r="31" fill="#fdd23c" />
        <path d="M440 63A31 31 0 0 1 494 64H467L453 87Z" fill="#e24034" />
        <path d="M440 63A31 31 0 0 0 463 110L480 86L453 87Z" fill="#36a852" />
        <circle cx="467" cy="79" r="15" fill="#fff" />
        <circle cx="467" cy="79" r="12" fill="#4384ee" />
      </Art>
      <Art vb="537 22 138 105">
        <path d="M592 50H628L636 100L622 108Z" fill="#c9c2a6" />
        <path d="M590 49H630L614 102L570 96Z" fill="#6cb0bf" />
        <path d="M594 54H626L618 78L582 76Z" fill="#b6dde2" />
        <path d="M592 49H630" stroke="#dfe6e7" strokeWidth="4" />
      </Art>

      <div className="ml-auto flex text-[11px] text-[#eef1f1]">
        <Art vb="81 36 105 105">
          <circle cx="124" cy="79" r="7" stroke="#fff" strokeWidth="3" />
          <circle cx="107" cy="92" r="7" stroke="#fff" strokeWidth="3" />
          <path d="M96 112Q96 100 107 100T119 112M116 90Q134 82 134 100" stroke="#fff" strokeWidth="3" />
        </Art>
        <Art vb="186 36 57 105">
          <path d="M200 102L216 86L232 102" stroke="#fff" strokeWidth="4" />
        </Art>
        <Art vb="243 36 72 105">
          <path d="M262 79H274M268 73V85M264 75L272 83M272 75L264 83" stroke="#fff" strokeWidth="2" />
          <path d="M273 110Q273 82 302 82M281 111Q281 91 302 91M289 111Q289 99 302 99" stroke="#7e898c" strokeWidth="3" />
          <circle cx="299" cy="109" r="3" fill="#7e898c" />
        </Art>
        <Art vb="315 36 66 105">
          <path d="M332 84H368V106H332ZM370 91V99" stroke="#fff" strokeWidth="3" />
          <path d="M337 88H350V102H337Z" fill="#fff" />
        </Art>
        <Art vb="381 36 66 105">
          <path d="M402 104Q392 102 400 90Q404 78 418 80Q428 82 430 90L412 96Z" fill="#8a8f90" />
          <path d="M412 106Q406 94 418 94Q426 84 432 92Q442 94 440 106Z" fill="#a9adae" />
        </Art>
        <Art vb="447 36 66 105">
          <path d="M463 89H470L480 79V110L470 101H463ZM486 88Q490 95 486 102M493 84Q500 95 493 106M500 79Q510 95 500 111" stroke="#fff" strokeWidth="3" />
        </Art>
        <Art vb="513 36 84 105">
          <path d="M540 108Q528 104 534 94Q542 90 544 88Q552 76 564 84L567 92Q576 94 575 102Q572 108 566 108Z" fill="#fff" />
          <path d="M553 104V92M547 97L553 91L559 97" stroke="#0a1b20" strokeWidth="4" />
        </Art>
        <span className="w-[25px] self-center pt-[3px] text-center tracking-[-0.4px]">ENG</span>
        <div className="ml-[7px] flex w-[58px] flex-col justify-center pt-[2px] text-center leading-[16.5px] tracking-[-0.3px] whitespace-nowrap">
          <div>11:40 AM</div>
          <div className="tracking-[-0.1px]">19-May-18</div>
        </div>
        <Art vb="864 36 156 105" className="-ml-px">
          <path d="M906 74H948V105H935L927 113L919 105H906Z" stroke="#fff" strokeWidth="3" />
          <path d="M1006 36V144" stroke="#56656a" strokeWidth="2" />
        </Art>
      </div>
    </div>
  )
}

export default function App() {
  return (
    <div className="relative h-[720px] w-[1280px] overflow-hidden bg-[#297a94] font-['Open_Sans','Noto_Sans',sans-serif] tracking-[-0.15px]">
      <Desktop />
      <Notepad />
      <Explorer />
      <Emblem />
      <Taskbar />
    </div>
  )
}
